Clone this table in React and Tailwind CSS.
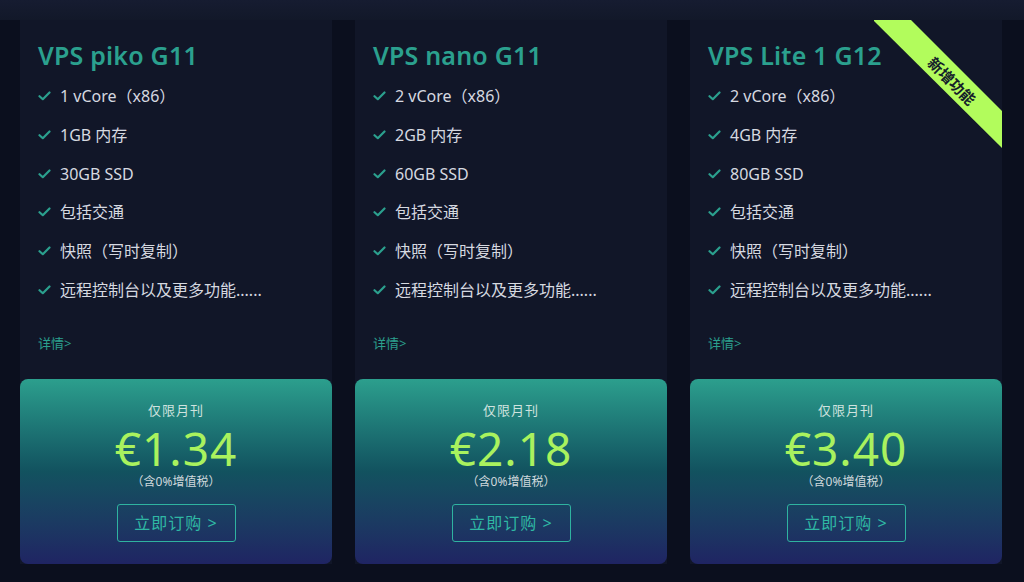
import React from 'react';

const plans = [
  { name: 'VPS piko G11', core: '1 vCore', ram: '1GB', disk: '30GB SSD', price: '€1.34' },
  { name: 'VPS nano G11', core: '2 vCore', ram: '2GB', disk: '60GB SSD', price: '€2.18' },
  { name: 'VPS Lite 1 G12', core: '2 vCore', ram: '4GB', disk: '80GB SSD', price: '€3.40', isNew: true },
];

const font = { fontFamily: '"Noto Sans", "Noto Sans CJK SC", sans-serif' };

const Check = () => (
  <svg width="13" height="10" viewBox="0 0 13 10" fill="none" className="shrink-0">
    <path d="M1.5 5.2 L4.8 8.2 L11.5 1.5" stroke="#2ba08e" strokeWidth="2.2" strokeLinecap="round" strokeLinejoin="round" />
  </svg>
);

const PlanCard = ({ plan }) => {
  const features = [
    `${plan.core}（x86）`,
    `${plan.ram} 内存`,
    plan.disk,
    '包括交通',
    '快照（写时复制）',
    '远程控制台以及更多功能......',
  ];

  return (
    <div className="relative w-[312px] bg-[#111628] flex flex-col overflow-hidden">
      {plan.isNew && (
        <div className="absolute top-0 right-0 w-[128px] h-[128px] pointer-events-none">
          <svg width="128" height="128" viewBox="0 0 128 128" className="absolute inset-0">
            <polygon points="-1,0 37,0 128,91 128,128" fill="#b2fc5c" />
          </svg>
          <div
            className="absolute left-[40px] top-[50px] w-[76px] h-[22px] leading-[22px] text-center text-[15px] font-bold text-[#14202a] rotate-45"
            style={font}
          >
            新增功能
          </div>
        </div>
      )}

      <div className="px-[18px] pt-[17px]">
        <h2 className="text-[25px] font-semibold text-[#2ba08e] leading-[36px] tracking-[0.2px]">{plan.name}</h2>
        <ul className="mt-[12px] flex flex-col gap-[16.8px]">
          {features.map((f) => (
            <li key={f} className="flex items-center gap-[9px] h-[22px] text-[16px] text-[#d6d9e0]">
              <Check />
              <span>{f}</span>
            </li>
          ))}
        </ul>
        <div className="mt-[33px] text-[13px] text-[#2ba08e]">详情&gt;</div>
      </div>

      <div className="mt-[26px] h-[185px] rounded-[8px] bg-gradient-to-b from-[#2c9f8d] via-[#12525f] to-[#1f2463] flex flex-col items-center">
        <div className="mt-[22px] h-[18px] leading-[18px] text-[13px] text-[#cfe3df] tracking-[1px]">仅限月刊</div>
        <div className="mt-[5px] h-[48px] text-[46px] leading-[48px] text-[#a9f25e] tracking-[1px]">{plan.price}</div>
        <div className="mt-[3px] h-[14px] leading-[14px] text-[12px] text-[#cfd8dc]">（含0%增值税）</div>
        <button className="mt-[15px] w-[119px] h-[38px] border border-[#2fb3a0] rounded-[3px] text-[16px] text-[#2fb8a4] tracking-[1px]">
          立即订购 &gt;
        </button>
      </div>
    </div>
  );
};

export default function App() {
  return (
    <div className="w-[1024px] h-[582px] bg-[#0b0f1e] overflow-hidden" style={font}>
      <div className="h-[20px] bg-gradient-to-b from-[#161c31] to-[#121829]" />
      <div className="flex gap-[23px] pl-[20px]">
        {plans.map((p) => (
          <PlanCard key={p.name} plan={p} />
        ))}
      </div>
    </div>
  );
}
